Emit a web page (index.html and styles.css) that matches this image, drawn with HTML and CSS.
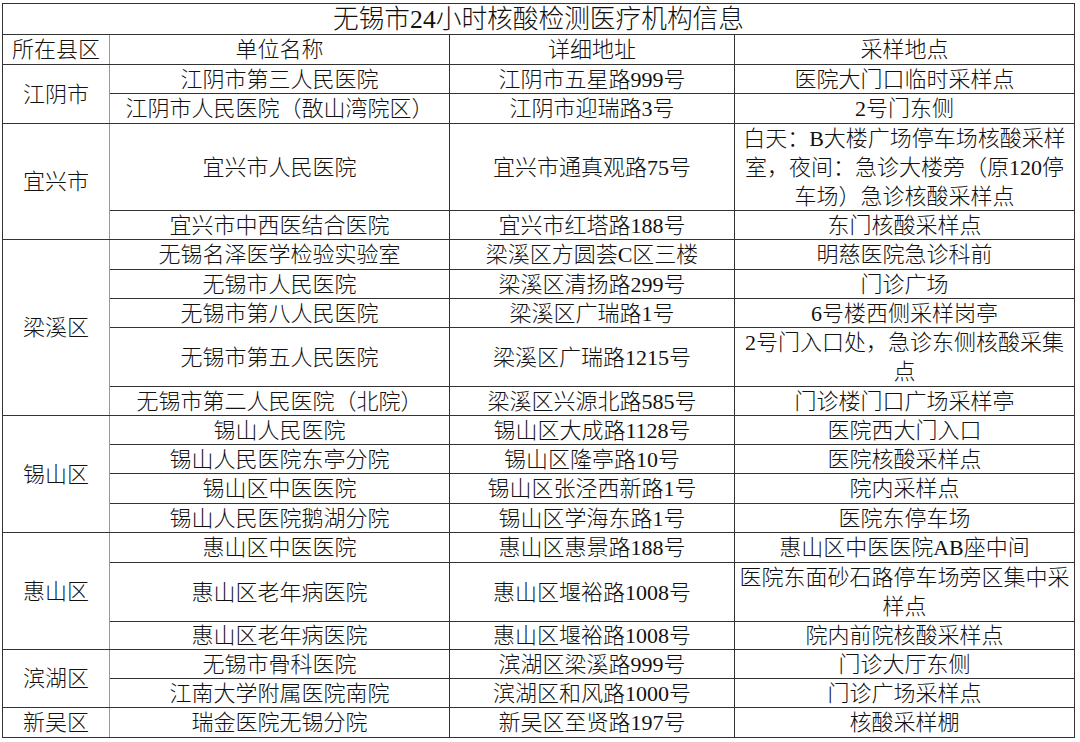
FILE: index.html
```html
<!DOCTYPE html>
<html lang="zh-CN">
<head>
<meta charset="utf-8">
<title>无锡市24小时核酸检测医疗机构信息</title>
<link rel="stylesheet" href="styles.css">
</head>
<body>
<div class="sheet">
  <div class="cell title">无锡市24小时核酸检测医疗机构信息</div>

  <div class="cell c1">所在县区</div>
  <div class="cell c2">单位名称</div>
  <div class="cell c3">详细地址</div>
  <div class="cell c4">采样地点</div>

  <div class="cell c1 span2">江阴市</div>
  <div class="cell c2">江阴市第三人民医院</div>
  <div class="cell c3">江阴市五星路999号</div>
  <div class="cell c4">医院大门口临时采样点</div>
  <div class="cell c2">江阴市人民医院（敔山湾院区）</div>
  <div class="cell c3">江阴市迎瑞路3号</div>
  <div class="cell c4">2号门东侧</div>

  <div class="cell c1 span2">宜兴市</div>
  <div class="cell c2">宜兴市人民医院</div>
  <div class="cell c3">宜兴市通真观路75号</div>
  <div class="cell c4 multi">白天：B大楼广场停车场核酸采样<br>室，夜间：急诊大楼旁（原120停<br>车场）急诊核酸采样点</div>
  <div class="cell c2">宜兴市中西医结合医院</div>
  <div class="cell c3">宜兴市红塔路188号</div>
  <div class="cell c4">东门核酸采样点</div>

  <div class="cell c1 span5">梁溪区</div>
  <div class="cell c2">无锡名泽医学检验实验室</div>
  <div class="cell c3">梁溪区方圆荟C区三楼</div>
  <div class="cell c4">明慈医院急诊科前</div>
  <div class="cell c2">无锡市人民医院</div>
  <div class="cell c3">梁溪区清扬路299号</div>
  <div class="cell c4">门诊广场</div>
  <div class="cell c2">无锡市第八人民医院</div>
  <div class="cell c3">梁溪区广瑞路1号</div>
  <div class="cell c4">6号楼西侧采样岗亭</div>
  <div class="cell c2">无锡市第五人民医院</div>
  <div class="cell c3">梁溪区广瑞路1215号</div>
  <div class="cell c4 multi">2号门入口处，急诊东侧核酸采集<br>点</div>
  <div class="cell c2">无锡市第二人民医院（北院）</div>
  <div class="cell c3">梁溪区兴源北路585号</div>
  <div class="cell c4">门诊楼门口广场采样亭</div>

  <div class="cell c1 span4">锡山区</div>
  <div class="cell c2">锡山人民医院</div>
  <div class="cell c3">锡山区大成路1128号</div>
  <div class="cell c4">医院西大门入口</div>
  <div class="cell c2">锡山人民医院东亭分院</div>
  <div class="cell c3">锡山区隆亭路10号</div>
  <div class="cell c4">医院核酸采样点</div>
  <div class="cell c2">锡山区中医医院</div>
  <div class="cell c3">锡山区张泾西新路1号</div>
  <div class="cell c4">院内采样点</div>
  <div class="cell c2">锡山人民医院鹅湖分院</div>
  <div class="cell c3">锡山区学海东路1号</div>
  <div class="cell c4">医院东停车场</div>

  <div class="cell c1 span3">惠山区</div>
  <div class="cell c2">惠山区中医医院</div>
  <div class="cell c3">惠山区惠景路188号</div>
  <div class="cell c4">惠山区中医医院AB座中间</div>
  <div class="cell c2">惠山区老年病医院</div>
  <div class="cell c3">惠山区堰裕路1008号</div>
  <div class="cell c4 multi">医院东面砂石路停车场旁区集中采<br>样点</div>
  <div class="cell c2">惠山区老年病医院</div>
  <div class="cell c3">惠山区堰裕路1008号</div>
  <div class="cell c4">院内前院核酸采样点</div>

  <div class="cell c1 span2">滨湖区</div>
  <div class="cell c2">无锡市骨科医院</div>
  <div class="cell c3">滨湖区梁溪路999号</div>
  <div class="cell c4">门诊大厅东侧</div>
  <div class="cell c2">江南大学附属医院南院</div>
  <div class="cell c3">滨湖区和风路1000号</div>
  <div class="cell c4">门诊广场采样点</div>

  <div class="cell c1">新吴区</div>
  <div class="cell c2">瑞金医院无锡分院</div>
  <div class="cell c3">新吴区至贤路197号</div>
  <div class="cell c4">核酸采样棚</div>
</div>
</body>
</html>
```

FILE: styles.css
```css
html, body {
  margin: 0;
  padding: 0;
  background: #ffffff;
}

body {
  font-family: "Liberation Serif", "Noto Sans CJK SC", serif;
  color: #111111;
}

.sheet {
  margin: 3px 0 0 2px;
  width: 1073px;
  box-sizing: border-box;
  padding: 1px;
  background: #333333;
  display: grid;
  grid-template-columns: 106px 339px 284px 339px;
  grid-template-rows: 30px 29px 28px 29px 86px 28px 29px 28px 28px 58px 28px 28px 28px 29px 28px 29px 58px 27px 28px 28px 29px;
  gap: 1px;
}

.cell {
  background: #ffffff;
  display: flex;
  align-items: center;
  justify-content: center;
  text-align: center;
  font-size: 22px;
  font-weight: 300;
  line-height: 29px;
  white-space: nowrap;
  overflow: hidden;
}

.title {
  grid-column: 1 / 5;
  font-size: 25.7px;
}

.c1 {
  grid-column: 1;
  box-shadow: 1px 0 0 #9a9a9a;
}

.c2 { grid-column: 2; }
.c3 { grid-column: 3; }
.c4 { grid-column: 4; }

.span2 { grid-row: span 2; }
.span3 { grid-row: span 3; }
.span4 { grid-row: span 4; }
.span5 { grid-row: span 5; }

.multi {
  line-height: 29px;
}
```
